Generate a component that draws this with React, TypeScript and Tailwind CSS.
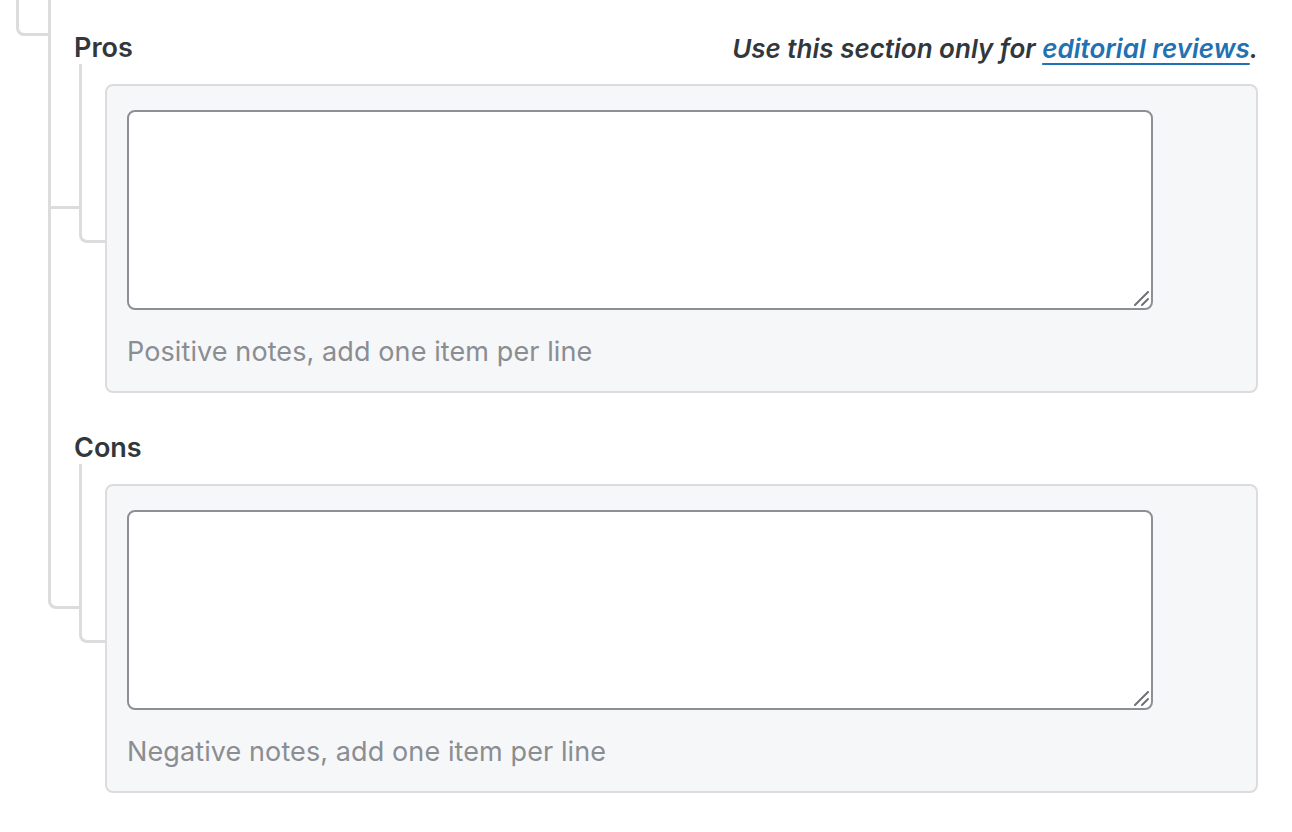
import React from "react";

function ResizeHandle() {
  return (
    <svg
      className="pointer-events-none absolute bottom-[3px] right-[3px]"
      width="16"
      height="16"
      viewBox="0 0 16 16"
    >
      <path d="M14 1 L1 14" stroke="#6d6f73" strokeWidth="2" strokeLinecap="round" />
      <path d="M14 8 L8 14" stroke="#6d6f73" strokeWidth="2" strokeLinecap="round" />
    </svg>
  );
}

function Field({
  label,
  help,
  note,
  className,
}: {
  label: string;
  help: string;
  note?: React.ReactNode;
  className?: string;
}) {
  return (
    <div className={className}>
      <div className="flex h-[36px] items-center justify-between">
        <span className="text-[27px] font-semibold text-[#32373c]">{label}</span>
        {note}
      </div>
      <div className="flex">
        {/* branch line from label down to the panel */}
        <div className="-mt-[2px] ml-[5px] h-[179px] w-[28px] shrink-0 rounded-bl-[8px] border-b-[3px] border-l-[3px] border-[#dcdcde]" />
        <div className="-ml-[2px] mt-[18px] flex-1 rounded-[8px] border-2 border-[#dcdcde] bg-[#f6f7f8] pb-[21px] pl-[20px] pt-[24px]">
          <div className="relative h-[200px] w-[1026px]">
            <textarea className="block h-full w-full resize-none rounded-[8px] border-2 border-[#8c8f94] bg-white outline-none" />
            <ResizeHandle />
          </div>
          <p className="mt-[24px] h-[36px] text-[27px] leading-[36px] tracking-[0.1px] text-[#8a8d92]">
            {help}
          </p>
        </div>
      </div>
    </div>
  );
}

export default function App() {
  return (
    <div className="relative h-[832px] w-[1292px] overflow-hidden bg-white font-['Inter',sans-serif]">
      {/* parent tree connectors */}
      <div className="absolute left-[16px] top-[-20px] h-[56px] w-[34px] rounded-bl-[8px] border-b-[3px] border-l-[3px] border-[#dcdcde]" />
      <div className="absolute left-[48px] top-[-10px] h-[619px] w-[33px] rounded-bl-[8px] border-b-[3px] border-l-[3px] border-[#dcdcde]" />
      <div className="absolute left-[50px] top-[206px] h-[3px] w-[31px] bg-[#dcdcde]" />

      <div className="relative pl-[74px] pr-[34px] pt-[30px]">
        <Field
          label="Pros"
          help="Positive notes, add one item per line"
          note={
            <span className="text-[26px] font-semibold italic text-[#32373c]">
              Use this section only for{" "}
              <a href="#" className="text-[#2271b1] underline underline-offset-[5px]">
                editorial reviews
              </a>
              .
            </span>
          }
        />
        <Field
          className="mt-[37px]"
          label="Cons"
          help="Negative notes, add one item per line"
        />
      </div>
    </div>
  );
}
